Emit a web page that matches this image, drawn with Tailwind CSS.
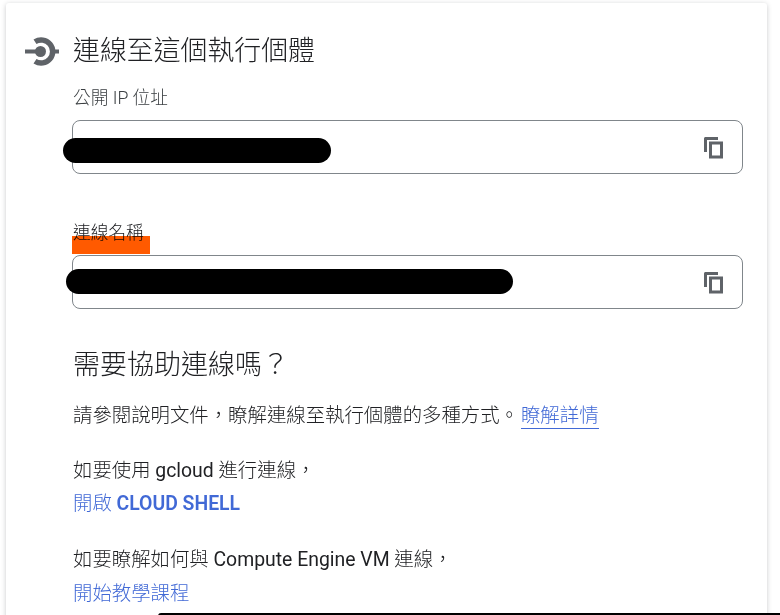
<!DOCTYPE html>
<html lang="zh-Hant">
<head>
<meta charset="utf-8">
<script src="https://cdn.jsdelivr.net/npm/@tailwindcss/browser@4"></script>
</head>
<body class="bg-white overflow-hidden">
<div class="relative w-[780px] h-[615px] overflow-hidden font-['Roboto','Noto_Sans_CJK_TC',sans-serif] text-[#202124]">
  <main class="absolute left-[6px] top-[3px] w-[761px] h-[640px] rounded-[3px] bg-white shadow-[0_1px_5px_rgba(60,64,67,0.28)] pl-[19px] pt-[30px]">
    <header class="flex items-center h-[36px] gap-[14px]">
      <svg class="w-[34px] h-[30px] shrink-0" viewBox="0 0 34 30" fill="none">
        <path d="M10 5.8A11.5 11.5 0 1 1 10 25.2" stroke="#5f6368" stroke-width="5.5"/>
        <circle cx="15.5" cy="15.5" r="5.5" fill="#5f6368"/>
        <path d="M0 15.5H12M26 15.5H34" stroke="#5f6368" stroke-width="4"/>
      </svg>
      <h1 class="text-[26.9px] leading-[36px] font-light">連線至這個執行個體</h1>
    </header>
    <div class="ml-[47px] w-[671px]">
      <section class="mt-[17px]">
        <label class="block pl-[1px] text-[17.7px] leading-[24px] font-light text-[#3c4043]">公開 IP 位址</label>
        <div class="mt-[10px] h-[54px] rounded-[8px] border border-[#80868b] flex items-center justify-end pr-[16px]">
          <svg class="w-[24px] h-[24px] mt-[2px]" viewBox="0 0 24 24" fill="#5f6368" fill-rule="evenodd"><path d="M16 1H3.5C2.7 1 2 1.7 2 2.5V16h3V4h11V1zM7 5.5h14v17H7v-17zM10 8.5v11h8v-11h-8z"/></svg>
        </div>
      </section>
      <section class="mt-[47px]">
        <label class="block pl-[1px] text-[17.7px] leading-[24px] font-light text-[#202124]">連線名稱</label>
        <div class="mt-[10px] h-[54px] rounded-[8px] border border-[#80868b] flex items-center justify-end pr-[16px]">
          <svg class="w-[24px] h-[24px] mt-[2px]" viewBox="0 0 24 24" fill="#5f6368" fill-rule="evenodd"><path d="M16 1H3.5C2.7 1 2 1.7 2 2.5V16h3V4h11V1zM7 5.5h14v17H7v-17zM10 8.5v11h8v-11h-8z"/></svg>
        </div>
      </section>
      <div class="pl-[1px]">
        <h2 class="mt-[38px] text-[27px] leading-[36px] font-light">需要協助連線嗎？</h2>
        <p class="mt-[20px] text-[19.4px] leading-[26px] font-light">請參閱說明文件，瞭解連線至執行個體的多種方式。<a class="ml-[2px] text-[#4169d6] border-b border-[#4169d6] pb-[1px]">瞭解詳情</a></p>
        <p class="mt-[29px] text-[19.4px] leading-[26px] font-light">如要使用 <span class="font-normal">gcloud</span> 進行連線，</p>
        <p class="mt-[7px] text-[19.4px] leading-[26px] font-light text-[#4169d6]">開啟 <span class="font-semibold">CLOUD SHELL</span></p>
        <p class="mt-[30px] text-[19.4px] leading-[26px] font-light">如要瞭解如何與 <span class="font-normal">Compute Engine VM</span> 連線，</p>
        <p class="mt-[8px] text-[19.4px] leading-[26px] font-light text-[#4169d6]">開始教學課程</p>
      </div>
    </div>
  </main>
  <div class="absolute left-[63px] top-[138px] w-[268px] h-[25px] rounded-full bg-black"></div>
  <div class="absolute left-[66px] top-[269px] w-[447px] h-[25px] rounded-full bg-black"></div>
  <div class="absolute left-[72px] top-[236px] w-[78px] h-[18px] bg-[#ff5a00] mix-blend-multiply"></div>
  <div class="absolute left-[158px] top-[613px] w-[622px] h-[6px] rounded-l-full bg-black"></div>
</div>
</body>
</html>
